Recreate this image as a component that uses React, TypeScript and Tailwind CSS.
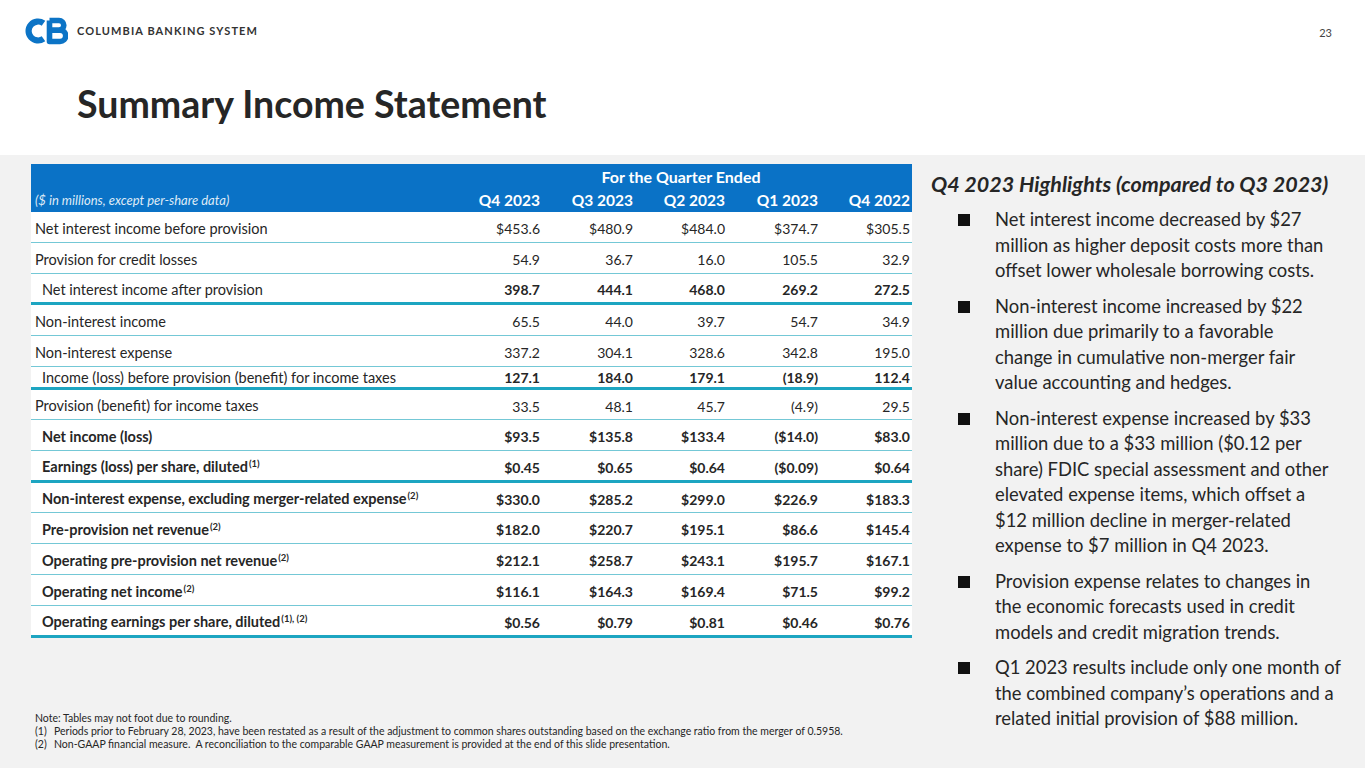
import React from "react";

type Row = {
  label: string;
  sup?: string;
  vals: string[];
  bold?: boolean;
  numBold?: boolean;
  indent?: boolean;
  thick?: boolean;
  h: string;
  pt?: string;
};

const rows: Row[] = [
  { label: "Net interest income before provision", vals: ["$453.6", "$480.9", "$484.0", "$374.7", "$305.5"], h: "h-[31px]" },
  { label: "Provision for credit losses", vals: ["54.9", "36.7", "16.0", "105.5", "32.9"], h: "h-[31px]" },
  { label: "Net interest income after provision", vals: ["398.7", "444.1", "468.0", "269.2", "272.5"], indent: true, thick: true, numBold: true, h: "h-[31px]" },
  { label: "Non-interest income", vals: ["65.5", "44.0", "39.7", "54.7", "34.9"], h: "h-[31px]" },
  { label: "Non-interest expense", vals: ["337.2", "304.1", "328.6", "342.8", "195.0"], h: "h-[31px]" },
  { label: "Income (loss) before provision (benefit) for income taxes", vals: ["127.1", "184.0", "179.1", "(18.9)", "112.4"], indent: true, thick: true, numBold: true, h: "h-[23px]", pt: "pt-[0px]" },
  { label: "Provision (benefit) for income taxes", vals: ["33.5", "48.1", "45.7", "(4.9)", "29.5"], h: "h-[30px]" },
  { label: "Net income (loss)", vals: ["$93.5", "$135.8", "$133.4", "($14.0)", "$83.0"], bold: true, h: "h-[31px]" },
  { label: "Earnings (loss) per share, diluted", sup: "(1)", vals: ["$0.45", "$0.65", "$0.64", "($0.09)", "$0.64"], bold: true, thick: true, h: "h-[32px]" },
  { label: "Non-interest expense, excluding merger-related expense", sup: "(2)", vals: ["$330.0", "$285.2", "$299.0", "$226.9", "$183.3"], bold: true, h: "h-[30px]" },
  { label: "Pre-provision net revenue", sup: "(2)", vals: ["$182.0", "$220.7", "$195.1", "$86.6", "$145.4"], bold: true, h: "h-[31px]" },
  { label: "Operating pre-provision net revenue", sup: "(2)", vals: ["$212.1", "$258.7", "$243.1", "$195.7", "$167.1"], bold: true, h: "h-[31px]" },
  { label: "Operating net income", sup: "(2)", vals: ["$116.1", "$164.3", "$169.4", "$71.5", "$99.2"], bold: true, h: "h-[31px]" },
  { label: "Operating earnings per share, diluted", sup: "(1), (2)", vals: ["$0.56", "$0.79", "$0.81", "$0.46", "$0.76"], bold: true, thick: true, h: "h-[32px]" },
];

const bullets: string[][] = [
  [
    "Net interest income decreased by $27",
    "million as higher deposit costs more than",
    "offset lower wholesale borrowing costs.",
  ],
  [
    "Non-interest income increased by $22",
    "million due primarily to a favorable",
    "change in cumulative non-merger fair",
    "value accounting and hedges.",
  ],
  [
    "Non-interest expense increased by $33",
    "million due to a $33 million ($0.12 per",
    "share) FDIC special assessment and other",
    "elevated expense items, which offset a",
    "$12 million decline in merger-related",
    "expense to $7 million in Q4 2023.",
  ],
  [
    "Provision expense relates to changes in",
    "the economic forecasts used in credit",
    "models and credit migration trends.",
  ],
  [
    "Q1 2023 results include only one month of",
    "the combined company\u2019s operations and a",
    "related initial provision of $88 million.",
  ],
];

const cols = "grid grid-cols-[419px_92px_93px_92px_93px_92px]";

function Logo() {
  return (
    <svg width="44" height="30" viewBox="0 0 44 30" className="shrink-0">
      <path
        d="M19.5 7.2 A9.5 9.5 0 1 0 19.5 22.8"
        fill="none"
        stroke="#0c74c6"
        strokeWidth="6.2"
        strokeLinecap="butt"
      />
      <path
        d="M25.5 4.5 H35 a4.8 4.8 0 0 1 0 9.6 H25.5 M25.5 14.1 H36 a5.7 5.7 0 0 1 0 11.4 H25.5 Z M25.5 4.5 V25.5"
        fill="none"
        stroke="#0c74c6"
        strokeWidth="5.6"
        strokeLinejoin="round"
      />
    </svg>
  );
}

export default function App() {
  return (
    <div className="w-[1365px] h-[768px] flex flex-col bg-white overflow-hidden font-['Lato',sans-serif] text-[#262626]">
      {/* Header */}
      <div className="h-[155px] shrink-0 bg-white flex flex-col">
        <div className="flex items-start pt-[16px] pl-[24px] pr-[33px]">
          <Logo />
          <div className="ml-[9px] mt-[8px] text-[11px] font-bold tracking-[0.1em] text-[#333] leading-[14px]">
            COLUMBIA BANKING SYSTEM
          </div>
          <div className="ml-auto mt-[10px] text-[11px] text-[#444] leading-[14px]">23</div>
        </div>
        <h1 className="pl-[77px] mt-[36px] text-[37.5px] font-bold leading-[44px] text-[#262626]">
          Summary Income Statement
        </h1>
      </div>

      {/* Body */}
      <div className="flex-1 bg-[#f2f2f2] flex">
        {/* Left column */}
        <div className="w-[912px] pl-[31px] pt-[9px] flex flex-col">
          <div className="w-[881px]">
            {/* header */}
            <div className="bg-[#0a72c6] text-white">
              <div className={`${cols} h-[24px] items-center pt-[1px]`}>
                <div />
                <div className="col-span-5 text-center text-[16px] font-bold">For the Quarter Ended</div>
              </div>
              <div className={`${cols} h-[24px] items-center pt-[1px]`}>
                <div className="pl-[4px] text-[13px] italic text-[#dfeaf6]">($ in millions, except per-share data)</div>
                {["Q4 2023", "Q3 2023", "Q2 2023", "Q1 2023", "Q4 2022"].map((q) => (
                  <div key={q} className="text-right pr-[2px] text-[15.5px] font-bold">
                    {q}
                  </div>
                ))}
              </div>
            </div>
            {/* rows */}
            {rows.map((r, i) => {
              const numBold = r.bold || r.numBold;
              return (
                <div
                  key={i}
                  className={`${cols} ${r.h} items-center bg-white text-[14px] ${r.pt ?? "pt-[3px]"} ${
                    r.thick ? "border-b-[3px] border-[#1da5c1]" : "border-b border-[#74c8d6]"
                  }`}
                >
                  <div
                    className={`${r.indent || r.bold ? "pl-[11px]" : "pl-[4px]"} ${
                      r.bold ? "font-bold" : ""
                    } text-[14.5px] whitespace-nowrap`}
                  >
                    {r.label}
                    {r.sup && <sup className="text-[9.5px] font-bold ml-[1px]">{r.sup}</sup>}
                  </div>
                  {r.vals.map((v, j) => (
                    <div key={j} className={`text-right pr-[2px] ${numBold ? "font-bold" : ""}`}>
                      {v}
                    </div>
                  ))}
                </div>
              );
            })}
          </div>
          <div className="mt-auto pb-[17px] pl-[4px] text-[10.5px] leading-[13px] text-[#262626]">
            <div>Note: Tables may not foot due to rounding.</div>
            <div className="flex">
              <span className="w-[19px]">(1)</span>
              <span>
                Periods prior to February 28, 2023, have been restated as a result of the adjustment to common shares outstanding based on the exchange ratio from the merger of 0.5958.
              </span>
            </div>
            <div className="flex">
              <span className="w-[19px]">(2)</span>
              <span>
                Non-GAAP financial measure.&nbsp; A reconciliation to the comparable GAAP measurement is provided at the end of this slide presentation.
              </span>
            </div>
          </div>
        </div>

        {/* Right column */}
        <div className="flex-1 pl-[19px] pt-[14px]">
          <div className="text-[21.5px] font-bold italic leading-[30px] text-[#262626] whitespace-nowrap">
            Q4 2023 Highlights (compared to Q3 2023)
          </div>
          <div className="mt-[8px] flex flex-col gap-[10px]">
            {bullets.map((lines, i) => (
              <div key={i} className="flex">
                <div className="w-[64px] shrink-0 flex justify-end pr-[25px] pt-[7px]">
                  <div className="w-[12px] h-[12px] bg-[#111]" />
                </div>
                <div className="text-[18.4px] leading-[25.5px] text-[#262626] whitespace-nowrap">
                  {lines.map((l, k) => (
                    <div key={k}>{l}</div>
                  ))}
                </div>
              </div>
            ))}
          </div>
        </div>
      </div>
    </div>
  );
}
